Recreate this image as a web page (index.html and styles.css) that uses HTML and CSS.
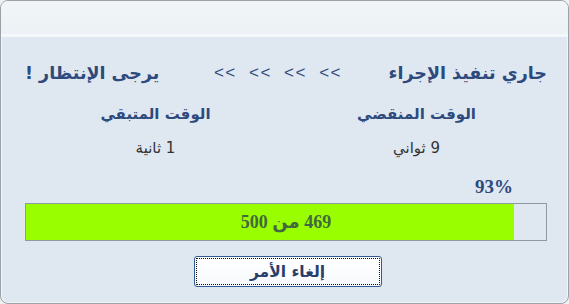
FILE: index.html
```html
<!DOCTYPE html>
<html lang="ar" dir="rtl">
<head>
    <meta charset="UTF-8">
    <title>جاري تنفيذ الإجراء</title>
    <link rel="stylesheet" href="styles.css">
</head>
<body>
    <div class="window">
        <div class="titlebar"></div>
        <div class="content">
            <div class="heading">
                <span class="heading-text">جاري تنفيذ الإجراء</span>
                <span class="arrows" dir="ltr">&lt;&lt; &lt;&lt; &lt;&lt; &lt;&lt;</span>
                <span class="heading-text">يرجى الإنتظار !</span>
            </div>

            <div class="times">
                <div class="time-box">
                    <div class="time-label">الوقت المنقضي</div>
                    <div class="time-value">9 ثواني</div>
                </div>
                <div class="time-box">
                    <div class="time-label">الوقت المتبقي</div>
                    <div class="time-value">1 ثانية</div>
                </div>
            </div>

            <div class="percent" dir="ltr">93%</div>

            <div class="progress">
                <div class="progress-fill" style="width: 93.8%;"></div>
                <div class="progress-text">469 من 500</div>
            </div>

            <div class="actions">
                <button class="cancel-btn">إلغاء الأمر</button>
            </div>
        </div>
    </div>
</body>
</html>
```

FILE: styles.css
```css
html, body {
    margin: 0;
    padding: 0;
}

body {
    width: 569px;
    height: 304px;
    background-color: #f0f0f0;
    font-family: 'DejaVu Sans', sans-serif;
}

.window {
    width: 569px;
    height: 304px;
    box-sizing: border-box;
    border: 1px solid #9aa1a7;
    border-radius: 8px;
    overflow: hidden;
    background-color: #dfe7f1;
    box-shadow: inset 0 0 0 1px #f3f6f9;
}

.titlebar {
    height: 33px;
    background: linear-gradient(to bottom, #f1f5f7, #ecf2f5);
    border-bottom: 3px solid #f5f8fa;
}

.content {
    padding: 24px 21px 0 24px;
}

.heading {
    display: flex;
    justify-content: space-between;
    align-items: center;
    height: 24px;
    color: #2e4a7d;
    font-weight: bold;
    font-size: 17.5px;
}

.arrows {
    font-family: 'Liberation Sans', sans-serif;
    font-weight: normal;
    font-size: 17px;
    letter-spacing: 1.5px;
    word-spacing: 6px;
    color: #2e4a7d;
    padding-left: 8px;
}

.times {
    display: grid;
    grid-template-columns: 1fr 1fr;
    margin-top: 18px;
}

.time-box {
    text-align: center;
}

.time-label {
    line-height: 22px;
    font-size: 15px;
    font-weight: bold;
    color: #2e4a7d;
}

.time-value {
    margin-top: 12px;
    line-height: 22px;
    font-size: 15px;
    color: #333;
}

.percent {
    margin-top: 17px;
    line-height: 22px;
    padding-right: 34px;
    text-align: right;
    font-family: 'Liberation Serif', serif;
    font-weight: bold;
    font-size: 19px;
    color: #2e4a7d;
}

.progress {
    position: relative;
    margin-top: 5px;
    height: 36px;
    border: 1px solid #8f9aa2;
    background-color: #dfe7f1;
}

.progress-fill {
    position: absolute;
    top: 0;
    left: 0;
    bottom: 0;
    background-color: #99ff00;
}

.progress-text {
    position: relative;
    line-height: 36px;
    text-align: center;
    font-family: 'Liberation Serif', 'DejaVu Sans', serif;
    font-weight: bold;
    font-size: 18px;
    color: #43683f;
}

.actions {
    display: flex;
    justify-content: center;
    margin-top: 15px;
    padding-left: 3px;
}

.cancel-btn {
    width: 188px;
    height: 31px;
    border: 1px solid #2f5a92;
    border-radius: 3px;
    background: linear-gradient(to bottom, #ffffff, #f6f9fc);
    outline: 1px dotted #111;
    outline-offset: -3px;
    font-family: 'DejaVu Sans', sans-serif;
    font-weight: bold;
    font-size: 15.5px;
    color: #2b3e6a;
    padding: 0;
}
```
